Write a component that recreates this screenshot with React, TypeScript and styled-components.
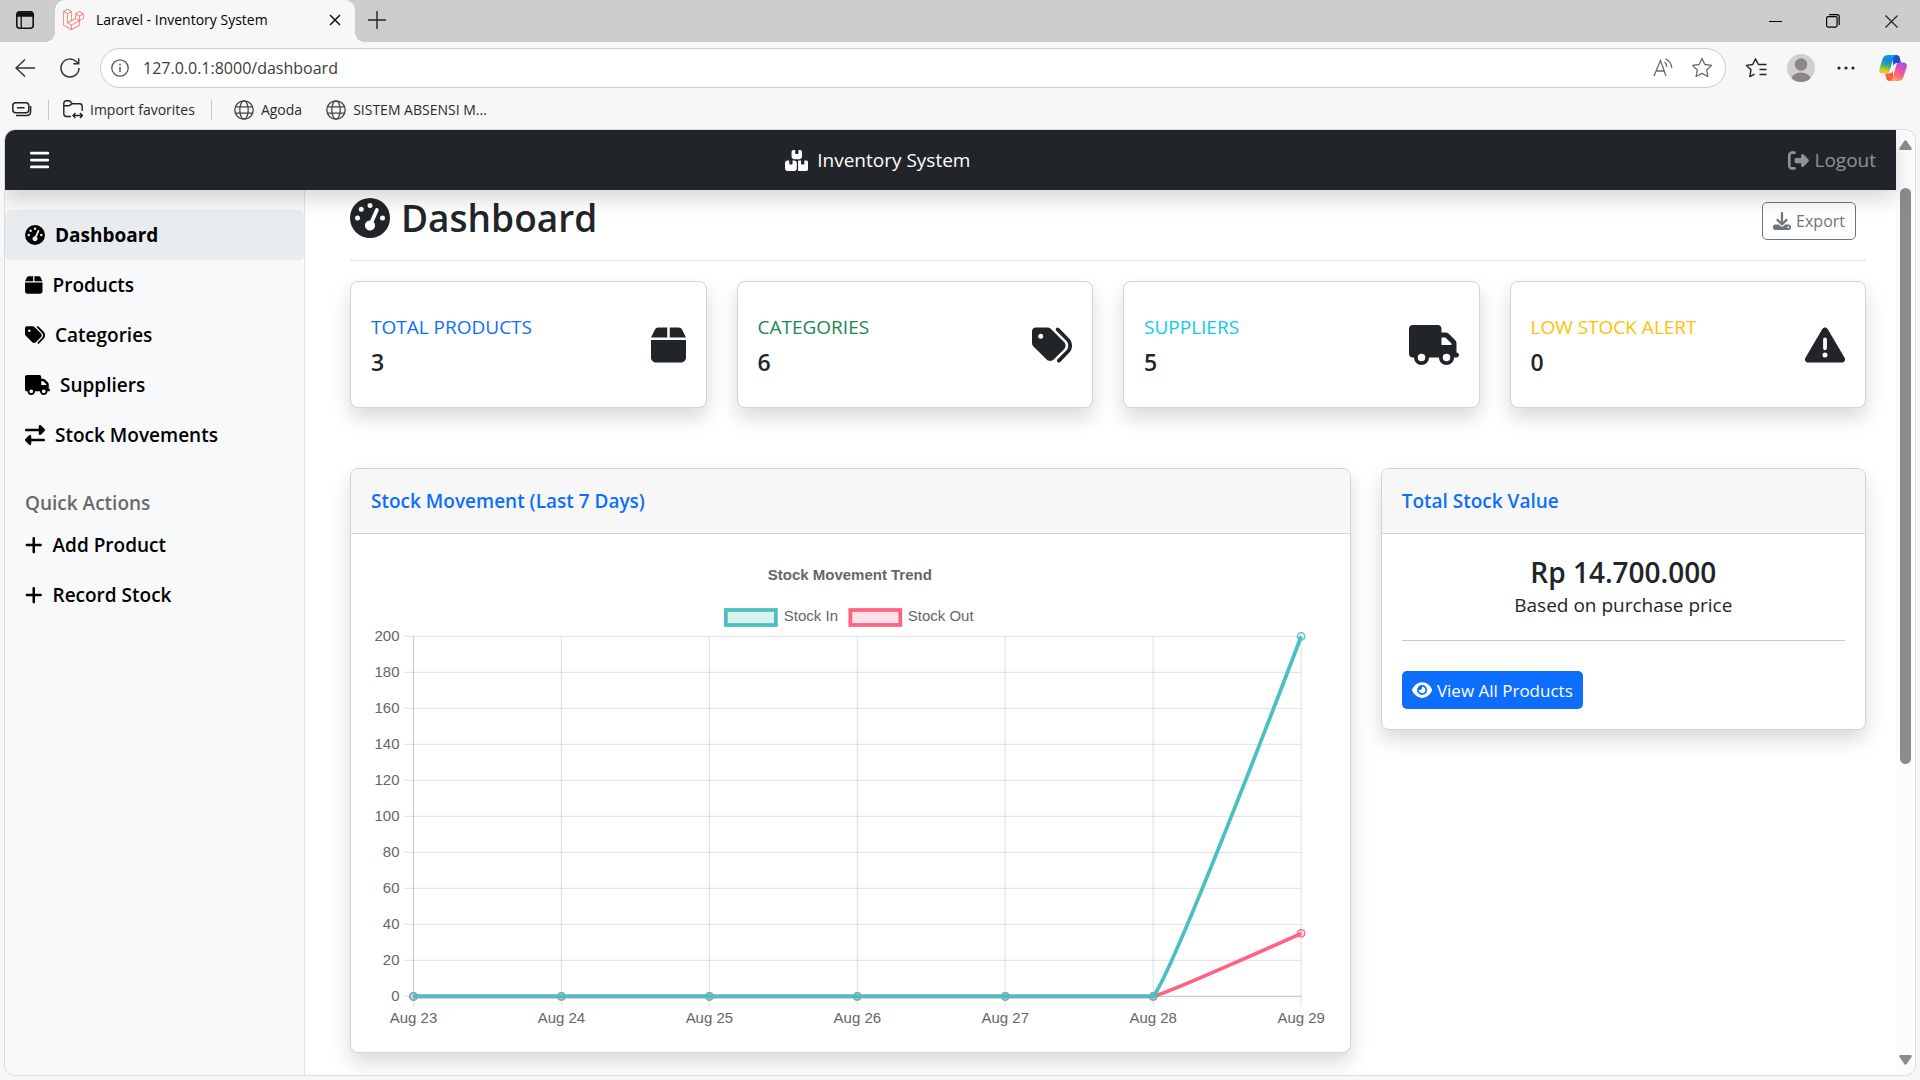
import React from "react";
import styled, { createGlobalStyle, css } from "styled-components";
import {
  FaGaugeHigh, FaBox, FaTags, FaTruck, FaRightLeft, FaPlus, FaBars, FaBoxesStacked,
  FaRightFromBracket, FaDownload, FaTriangleExclamation, FaEye, FaLaravel,
} from "react-icons/fa6";

const uiFont = `"Segoe UI", "Open Sans", "Noto Sans", sans-serif`;
const shadow = "0 10px 20px rgba(0, 0, 0, 0.15)";

const GlobalStyle = createGlobalStyle`
  *, *::before, *::after { box-sizing: border-box; }
  body { margin: 0; font-family: ${uiFont}; color: #212529; background: #f7f7f7; }
  h1, h2, h3, p, ul, dl, dd { margin: 0; padding: 0; }
  ul { list-style: none; }
  a { text-decoration: none; color: inherit; }
  button, input { font: inherit; color: inherit; }
  svg { flex: none; display: block; }
`;

/* ---------- Browser window ---------- */

const Window = styled.div`
  display: flex;
  flex-direction: column;
  height: 100vh;
  overflow: hidden;
`;

const PlainButton = styled.button`
  display: grid;
  place-items: center;
  padding: 0;
  border: 0;
  background: none;
  color: #1f1f1f;
`;

const TabStrip = styled.header`
  display: flex;
  height: 42px;
  flex: none;
  background: #cdcdcd;
`;

const TabMenuButton = styled(PlainButton)`
  width: 50px;
  height: 40px;
`;

const Tab = styled.div`
  position: relative;
  display: flex;
  align-items: center;
  width: 300px;
  margin-left: 5px;
  padding: 0 10px 3px 8px;
  border-radius: 10px 10px 0 0;
  background: #f7f7f7;
  font-size: 14px;
  color: #000;
  svg.logo { color: #ff5a4f; }
  &::before, &::after {
    content: "";
    position: absolute;
    bottom: 0;
    width: 10px;
    height: 10px;
  }
  &::before { left: -10px; background: radial-gradient(circle at 0 0, transparent 10px, #f7f7f7 10px); }
  &::after { right: -10px; background: radial-gradient(circle at 100% 0, transparent 10px, #f7f7f7 10px); }
`;

const TabTitle = styled.span`
  flex: 1;
  margin-left: 12px;
  white-space: nowrap;
`;

const TabButton = styled(PlainButton)`
  width: 20px;
  height: 20px;
`;

const NewTabButton = styled(PlainButton)`
  width: 44px;
  height: 40px;
`;

const WindowControls = styled.div`
  display: flex;
  margin-left: auto;
  button { width: 58px; height: 42px; }
`;

const Toolbar = styled.div`
  display: flex;
  align-items: center;
  flex: none;
  height: 52px;
  padding: 0 13px 0 10px;
`;

const NavButton = styled(PlainButton)`
  width: 30px;
  height: 30px;
  & + & { margin-left: 15px; }
`;

const AddressBar = styled.label`
  display: flex;
  align-items: center;
  flex: 1;
  height: 40px;
  margin-left: 15px;
  padding: 0 12px 0 10px;
  border: 1px solid #cbcbcb;
  border-radius: 20px;
  background: #fff;
  color: #5c5c5c;
`;

const AddressInput = styled.input`
  flex: 1;
  min-width: 0;
  margin: 0 14px;
  padding: 0;
  border: 0;
  outline: 0;
  background: none;
  font-size: 16px;
  color: #3c3c3c;
`;

const AddressActions = styled.div`
  display: flex;
  gap: 18px;
  button { color: #6a6a6a; }
`;

const ToolbarActions = styled.div`
  display: flex;
  align-items: center;
  gap: 17px;
  margin-left: 20px;
`;

const Favorites = styled.nav`
  display: flex;
  align-items: center;
  flex: none;
  height: 36px;
  padding: 0 0 5px 12px;
  font-size: 14px;
  color: #2b2b2b;
  a { display: flex; align-items: center; gap: 7px; white-space: nowrap; }
`;

const Divider = styled.span`
  width: 1px;
  height: 20px;
  margin: 0 14px 0 16px;
  background: #c6c6c6;
`;

const FavoriteLinks = styled.div`
  display: flex;
  gap: 24px;
  margin-left: 8px;
`;

/* ---------- Page ---------- */

const Viewport = styled.div`
  display: flex;
  flex: 1;
  min-height: 0;
  margin: 0 5px 5px;
  border-radius: 10px;
  overflow: hidden;
  background: #fff;
  box-shadow: 0 0 0 1px #dcdcdc;
`;

const Page = styled.div`
  display: flex;
  flex-direction: column;
  flex: 1;
  min-width: 0;
`;

const Navbar = styled.header`
  position: relative;
  z-index: 1;
  display: grid;
  grid-template-columns: 5fr auto 6fr;
  align-items: center;
  flex: none;
  height: 60px;
  padding: 0 20px 0 25px;
  background: #212529;
  color: #fff;
  box-shadow: ${shadow};
`;

const MenuButton = styled(PlainButton)`
  justify-self: start;
  color: #fff;
`;

const Brand = styled.a`
  display: flex;
  align-items: center;
  gap: 9px;
  font-size: 19px;
`;

const Logout = styled.a`
  display: flex;
  align-items: center;
  justify-self: end;
  gap: 5px;
  font-size: 19px;
  color: #909294;
`;

const Body = styled.div`
  display: flex;
  flex: 1;
  min-height: 0;
`;

const Sidebar = styled.nav`
  flex: none;
  width: 300px;
  padding-top: 20px;
  border-right: 1px solid #dee2e6;
  background: #f8f9fa;
`;

const SideLink = styled.a<{ $active?: boolean }>`
  display: flex;
  align-items: center;
  gap: 10px;
  height: 50px;
  padding: 0 20px;
  border-radius: 5px;
  font-size: 19px;
  font-weight: 600;
  color: #000;
  ${(p) => p.$active && css`
    background: #e9ecef;
    font-weight: 700;
  `}
`;

const SideHeading = styled.h2`
  margin: 30px 20px 4px;
  font-size: 19px;
  font-weight: 600;
  line-height: 26px;
  color: #67696c;
`;

const Main = styled.main`
  flex: 1;
  min-width: 0;
  padding: 0 30px 0 45px;
  overflow: hidden;
`;

const TitleRow = styled.div`
  display: flex;
  align-items: center;
  justify-content: space-between;
  height: 71px;
  margin-bottom: 20px;
  padding-right: 10px;
  border-bottom: 1px solid #dee2e6;
`;

const Title = styled.h1`
  display: flex;
  align-items: center;
  gap: 11px;
  padding-bottom: 15px;
  font-size: 37px;
  font-weight: 600;
  line-height: 48px;
`;

const actionButton = css`
  display: inline-flex;
  align-items: center;
  gap: 5px;
  height: 38px;
  padding: 0 10px;
  border-radius: 5px;
`;

const ExportButton = styled.button`
  ${actionButton}
  margin-top: -8px;
  border: 1px solid #6c757d;
  background: none;
  font-size: 16px;
  color: #6c757d;
`;

const ProductsLink = styled.a`
  ${actionButton}
  background: #0d6efd;
  font-size: 17px;
  color: #fff;
`;

const StatGrid = styled.section`
  display: grid;
  grid-template-columns: repeat(4, 1fr);
  gap: 30px;
  margin-bottom: 60px;
`;

const Card = styled.article`
  border: 1px solid #d3d3d3;
  border-radius: 8px;
  background: #fff;
  box-shadow: ${shadow};
`;

const StatCard = styled(Card)`
  display: flex;
  align-items: center;
  justify-content: space-between;
  height: 127px;
  padding: 0 20px;
`;

const StatLabel = styled.h2<{ $color: string }>`
  font-size: 19px;
  font-weight: 400;
  line-height: 30px;
  text-transform: uppercase;
  color: ${(p) => p.$color};
`;

const StatValue = styled.p`
  margin-top: 5px;
  font-size: 23px;
  font-weight: 600;
  line-height: 30px;
`;

const PanelRow = styled.section`
  display: flex;
  align-items: flex-start;
  gap: 30px;
`;

const ChartCard = styled(Card)`
  width: calc((100% + 30px) * 2 / 3 - 30px);
`;

const ValueCard = styled(Card)`
  flex: 1;
`;

const CardHeader = styled.h2`
  padding: 0 20px;
  border-bottom: 1px solid #d3d3d3;
  border-radius: 7px 7px 0 0;
  background: #f7f7f7;
  font-size: 19px;
  font-weight: 600;
  line-height: 64px;
  color: #0d6efd;
`;

const CardBody = styled.div`
  padding: 20px;
`;

const ValueSummary = styled.div`
  padding-bottom: 20px;
  margin-bottom: 30px;
  border-bottom: 1px solid #c8c9ca;
  text-align: center;
`;

const Amount = styled.p`
  font-size: 28px;
  font-weight: 600;
  line-height: 36px;
`;

const Basis = styled.p`
  font-size: 19px;
  line-height: 30px;
`;

const ChartSvg = styled.svg`
  width: 100%;
  height: auto;
  font-family: Helvetica, "Liberation Sans", Arial, sans-serif;
  font-size: 15px;
`;

/* ---------- Scroll bar ---------- */

const ScrollTrack = styled.div`
  display: flex;
  flex-direction: column;
  align-items: center;
  flex: none;
  width: 19px;
  padding: 10px 0;
  background: #fcfcfc;
`;

const ScrollGap = styled.div<{ $grow: number }>`
  flex: ${(p) => p.$grow} 0 0;
`;

const Thumb = styled.div`
  flex: 576 0 0;
  width: 11px;
  border-radius: 6px;
  background: #8b8b8b;
`;

/* ---------- Icons ---------- */

/* Each glyph keeps the width of its own box, given as a ratio of the height. */
const IconSlot = styled.span<{ $size: number; $ratio?: number }>`
  display: flex;
  svg {
    width: ${(p) => p.$size * (p.$ratio || 1)}px;
    height: ${(p) => p.$size}px;
  }
`;

const Globe = () => (
  <svg width="20" height="20" viewBox="0 0 20 20" fill="none" stroke="#444" strokeWidth="1.3">
    <circle cx="10" cy="10" r="9.2" />
    <ellipse cx="10" cy="10" rx="4.2" ry="9.2" />
    <path d="M1.6 6.8h16.8M1.6 13.2h16.8" />
  </svg>
);

const Copilot = () => (
  <svg width="28" height="26" viewBox="0 0 28 26">
    <defs>
      <linearGradient id="cpA" x1="0.6" y1="0" x2="0.4" y2="1">
        <stop offset="0" stopColor="#0fa5e9" />
        <stop offset="0.3" stopColor="#1487dc" />
        <stop offset="0.6" stopColor="#3fae80" />
        <stop offset="0.85" stopColor="#d3cf22" />
        <stop offset="1" stopColor="#ffc21a" />
      </linearGradient>
      <linearGradient id="cpB" x1="0.8" y1="0" x2="0.3" y2="1">
        <stop offset="0" stopColor="#a34df5" />
        <stop offset="0.45" stopColor="#e9549f" />
        <stop offset="0.7" stopColor="#fb6a78" />
        <stop offset="1" stopColor="#ffb05a" />
      </linearGradient>
    </defs>
    <path d="M13 0h4.500c1.800 0 2.800 1 3.300 2.600L22 8h-4c-2 0-3 1-3.600 3z" fill="#1c4fd8" />
    <path d="M15 26h-4.500c-1.800 0-2.800-1-3.300-2.800L6 18.500h4c2 0 3-1 3.600-3z" fill="#f9603c" />
    <path d="M9 0h8.500c-1.700 0-2.600 1.200-3.100 3l-3.600 12.500c-.6 2-1.600 3-3.600 3H3.500C.8 18.500-.3 16.400.3 14L3.600 4C4.500 1.400 6.300 0 9 0z" fill="url(#cpA)" />
    <path d="M19 26h-8.500c1.700 0 2.600-1.200 3.100-3l3.600-12.500c.6-2 1.600-3 3.600-3h3.700c2.700 0 3.800 2.100 3.200 4.500l-3.300 10c-.9 2.600-2.700 4-5.400 4z" fill="url(#cpB)" />
  </svg>
);

/* ---------- Chart ---------- */

const days = ["Aug 23", "Aug 24", "Aug 25", "Aug 26", "Aug 27", "Aug 28", "Aug 29"];
const ticks = Array.from({ length: 11 }, (_, i) => i * 20);
const stockIn = [0, 0, 0, 0, 0, 0, 200];
const stockOut = [0, 0, 0, 0, 0, 0, 35];
const left = 42.5;
const top = 82.5;
const stepX = 148;
const stepY = 36;
const px = (i: number) => left + i * stepX;
const py = (v: number) => top + ((200 - v) / 20) * stepY;
const TENSION = 0.1;

function smoothPath(values: number[]) {
  const pts = values.map((v, i) => ({ x: px(i), y: py(v) }));
  const clamp = (y: number) => Math.min(Math.max(y, py(200)), py(0));
  const handles = pts.map((p, i) => {
    const a = pts[i - 1] || p;
    const b = pts[i + 1] || p;
    const before = Math.hypot(p.x - a.x, p.y - a.y);
    const after = Math.hypot(b.x - p.x, b.y - p.y);
    const fa = (TENSION * before) / (before + after);
    const fb = (TENSION * after) / (before + after);
    const end = i === 0 || i === pts.length - 1;
    return end
      ? { inn: p, out: p }
      : {
          inn: { x: p.x - fa * (b.x - a.x), y: clamp(p.y - fa * (b.y - a.y)) },
          out: { x: p.x + fb * (b.x - a.x), y: clamp(p.y + fb * (b.y - a.y)) },
        };
  });
  return pts
    .map((p, i) =>
      i === 0
        ? `M${p.x} ${p.y}`
        : `C${handles[i - 1].out.x} ${handles[i - 1].out.y} ${handles[i].inn.x} ${handles[i].inn.y} ${p.x} ${p.y}`
    )
    .join("");
}

const Series = ({ values, color }: { values: number[]; color: string }) => (
  <g stroke={color}>
    <path d={smoothPath(values)} fill="none" strokeWidth="3.75" />
    {values.map((v, i) => (
      <circle key={i} cx={px(i)} cy={py(v)} r="3.75" fill={color} fillOpacity="0.2" strokeWidth="1.25" />
    ))}
  </g>
);

const StockChart = () => (
  <ChartSvg viewBox="0 0 959 478" role="img" aria-label="Stock Movement Trend">
    <g fill="#666">
      <text x="479" y="26" textAnchor="middle" fontWeight="700">Stock Movement Trend</text>
      <text x="413" y="67">Stock In</text>
      <text x="537" y="67">Stock Out</text>
    </g>
    <g strokeWidth="3.75" fillOpacity="0.2">
      <rect x="355" y="56" width="50" height="15" stroke="#4bc0c0" fill="#4bc0c0" />
      <rect x="479.500" y="56" width="50" height="15" stroke="#ff6384" fill="#ff6384" />
    </g>
    <g stroke="#000" strokeOpacity="0.1" strokeWidth="1.25">
      {days.map((d, i) => (
        <path key={d} d={`M${px(i)} ${py(200)}V${py(0) + 10}`} />
      ))}
      {ticks.map((t) => (
        <path key={t} d={`M${left - 10} ${py(t)}H${px(6)}`} />
      ))}
      <path d={`M${px(0)} ${py(200)}V${py(0)}H${px(6)}`} fill="none" />
    </g>
    <g fill="#666">
      {ticks.map((t) => (
        <text key={t} x={left - 14} y={py(t) + 5} textAnchor="end">{t}</text>
      ))}
      {days.map((d, i) => (
        <text key={d} x={px(i)} y={py(0) + 27} textAnchor="middle">{d}</text>
      ))}
    </g>
    <Series values={stockOut} color="#ff6384" />
    <Series values={stockIn} color="#4bc0c0" />
  </ChartSvg>
);

/* ---------- App ---------- */

const stats = [
  { label: "Total Products", value: 3, color: "#0d6efd", icon: <FaBox />, ratio: 0.875 },
  { label: "Categories", value: 6, color: "#198754", icon: <FaTags />, ratio: 1 },
  { label: "Suppliers", value: 5, color: "#0dcaf0", icon: <FaTruck />, ratio: 1.25 },
  { label: "Low Stock Alert", value: 0, color: "#ffc107", icon: <FaTriangleExclamation />, ratio: 1 },
];

const menu = [
  { label: "Dashboard", icon: <FaGaugeHigh />, ratio: 1, active: true },
  { label: "Products", icon: <FaBox />, ratio: 0.875 },
  { label: "Categories", icon: <FaTags />, ratio: 1 },
  { label: "Suppliers", icon: <FaTruck />, ratio: 1.25 },
  { label: "Stock Movements", icon: <FaRightLeft />, ratio: 1 },
];

const actions = ["Add Product", "Record Stock"];

export default function App() {
  return (
    <Window>
      <GlobalStyle />
      <TabStrip>
        <TabMenuButton aria-label="Tab actions">
          <svg width="18" height="18" viewBox="0 0 18 18" fill="none" stroke="#111" strokeWidth="1.6">
            <rect x="0.8" y="0.8" width="16.400" height="16.400" rx="3" />
            <path d="M1 3.500h16" strokeWidth="4.500" />
            <path d="M5.200 5v12" strokeWidth="1.300" />
          </svg>
        </TabMenuButton>
        <Tab>
          <FaLaravel className="logo" size={21} />
          <TabTitle>Laravel - Inventory System</TabTitle>
          <TabButton aria-label="Close tab">
            <svg width="12" height="12" viewBox="0 0 12 12" stroke="#111" strokeWidth="1.500"><path d="M1 1l10 10M11 1L1 11" /></svg>
          </TabButton>
        </Tab>
        <NewTabButton aria-label="New tab">
          <svg width="18" height="18" viewBox="0 0 18 18" stroke="#222" strokeWidth="1.400"><path d="M9 0v18M0 9h18" /></svg>
        </NewTabButton>
        <WindowControls>
          <PlainButton aria-label="Minimize"><svg width="13" height="13" viewBox="0 0 13 13" stroke="#000"><path d="M0 6.500h13" /></svg></PlainButton>
          <PlainButton aria-label="Restore">
            <svg width="14" height="14" viewBox="0 0 14 14" fill="none" stroke="#000" strokeWidth="1.200"><rect x="0.600" y="2.600" width="10.500" height="10.500" rx="1.500" /><path d="M3 .6h8q2.200 0 2.200 2.200V11" /></svg>
          </PlainButton>
          <PlainButton aria-label="Close"><svg width="13" height="13" viewBox="0 0 13 13" stroke="#222" strokeWidth="1.200"><path d="M.5.5l12 12M12.500.5l-12 12" /></svg></PlainButton>
        </WindowControls>
      </TabStrip>

      <Toolbar>
        <NavButton aria-label="Back">
          <svg width="20" height="18" viewBox="0 0 20 18" fill="none" stroke="#333" strokeWidth="1.400"><path d="M20 9H1M10 .5L1 9l9 8.500" /></svg>
        </NavButton>
        <NavButton aria-label="Refresh">
          <svg width="20" height="20" viewBox="0 0 20 20" fill="none" stroke="#333" strokeWidth="1.500"><path d="M19 10a9 9 0 1 1-2.800-6.500L18.500 5.500M18.700 .3v5.400h-5.400" /></svg>
        </NavButton>
        <AddressBar>
          <svg width="18" height="18" viewBox="0 0 18 18" fill="none" stroke="#555" strokeWidth="1.300"><circle cx="9" cy="9" r="8.200" /><path d="M9 8v5M9 4.800v1.600" strokeWidth="1.500" /></svg>
          <AddressInput aria-label="Address" type="text" defaultValue="127.0.0.1:8000/dashboard" />
          <AddressActions>
            <PlainButton aria-label="Read aloud">
              <svg width="20" height="20" viewBox="0 0 20 20" fill="none" stroke="#6a6a6a" strokeWidth="1.300"><path d="M1 18L7.500 2.500 13 18M3.200 13h8M11.500 4q2 1.500 2.300 4.800M12.500 .8Q18.500 4 18.800 10" /></svg>
            </PlainButton>
            <PlainButton aria-label="Add to favorites">
              <svg width="22" height="22" viewBox="0 0 22 22" fill="none" stroke="#6a6a6a" strokeWidth="1.300" strokeLinejoin="round"><path d="M11 1.500l2.900 6 6.600.9-4.800 4.600 1.200 6.500-5.900-3.100-5.900 3.100 1.200-6.500L1.500 8.400l6.600-.9z" /></svg>
            </PlainButton>
          </AddressActions>
        </AddressBar>
        <ToolbarActions>
          <PlainButton aria-label="Favorites">
            <svg width="24" height="22" viewBox="1 0 24 22" fill="none" stroke="#222" strokeWidth="1.400" strokeLinejoin="round"><path d="M13.300 7.500L10.500 1.800l-2.800 5.700-6.300.9L6 12.800l-1.200 6.800 4.800-2.500M13.300 7.500h8.200M14.500 12.500h7M14.500 17.500h7" /></svg>
          </PlainButton>
          <PlainButton aria-label="Profile">
            <svg width="28" height="28" viewBox="0 0 28 28"><defs><clipPath id="pf"><circle cx="14" cy="14" r="14" /></clipPath></defs><g clipPath="url(#pf)"><rect width="28" height="28" fill="#d2d0ce" /><circle cx="14" cy="10.500" r="6.200" fill="#8a8786" /><ellipse cx="14" cy="26" rx="10" ry="7.500" fill="#8a8786" /></g></svg>
          </PlainButton>
          <PlainButton aria-label="Settings and more">
            <svg width="30" height="6" viewBox="0 0 30 6" fill="#222"><circle cx="7" cy="3" r="1.600" /><circle cx="14" cy="3" r="1.600" /><circle cx="21" cy="3" r="1.600" /></svg>
          </PlainButton>
          <PlainButton aria-label="Copilot"><Copilot /></PlainButton>
        </ToolbarActions>
      </Toolbar>

      <Favorites>
        <PlainButton aria-label="Hide favorites">
          <svg width="20" height="15" viewBox="0 0 20 15" fill="none" stroke="#222" strokeWidth="1.500"><rect x="0.800" y="0.800" width="16" height="10" rx="3" /><path d="M5 5.800h7.500M18.600 4v5.500q0 4-4 4H4" /></svg>
        </PlainButton>
        <Divider />
        <a href="#import">
          <svg width="20" height="19" viewBox="0 0 20 19" fill="none" stroke="#222" strokeWidth="1.400"><path d="M8 16.500H3.500q-2.700 0-2.700-2.700V3.500Q.8.800 3.500.8h3l3 3h7q2.700 0 2.700 2.700V11M1 5.800h5l3-2M10.500 15.500h9M12.500 13l-2.500 2.500 2.500 2.500M17 13l2.500 2.500L17 18" /></svg>
          Import favorites
        </a>
        <Divider />
        <FavoriteLinks>
          <a href="#agoda"><Globe />Agoda</a>
          <a href="#absensi"><Globe />SISTEM ABSENSI M...</a>
        </FavoriteLinks>
      </Favorites>

      <Viewport>
        <Page>
          <Navbar>
            <MenuButton aria-label="Toggle menu"><IconSlot $size={22} $ratio={0.875}><FaBars /></IconSlot></MenuButton>
            <Brand href="#home"><IconSlot $size={21} $ratio={1.125}><FaBoxesStacked /></IconSlot>Inventory System</Brand>
            <Logout href="#logout"><IconSlot $size={21}><FaRightFromBracket /></IconSlot>Logout</Logout>
          </Navbar>
          <Body>
            <Sidebar>
              <ul>
                {menu.map((m) => (
                  <li key={m.label}>
                    <SideLink href="#" $active={m.active}><IconSlot $size={20} $ratio={m.ratio}>{m.icon}</IconSlot>{m.label}</SideLink>
                  </li>
                ))}
              </ul>
              <SideHeading>Quick Actions</SideHeading>
              <ul>
                {actions.map((a) => (
                  <li key={a}><SideLink href="#"><IconSlot $size={20} $ratio={0.875}><FaPlus /></IconSlot>{a}</SideLink></li>
                ))}
              </ul>
            </Sidebar>
            <Main>
              <TitleRow>
                <Title><IconSlot $size={40}><FaGaugeHigh /></IconSlot>Dashboard</Title>
                <ExportButton><IconSlot $size={18}><FaDownload /></IconSlot>Export</ExportButton>
              </TitleRow>
              <StatGrid>
                {stats.map((s) => (
                  <StatCard key={s.label}>
                    <div>
                      <StatLabel $color={s.color}>{s.label}</StatLabel>
                      <StatValue>{s.value}</StatValue>
                    </div>
                    <IconSlot $size={40} $ratio={s.ratio}>{s.icon}</IconSlot>
                  </StatCard>
                ))}
              </StatGrid>
              <PanelRow>
                <ChartCard>
                  <CardHeader>Stock Movement (Last 7 Days)</CardHeader>
                  <CardBody><StockChart /></CardBody>
                </ChartCard>
                <ValueCard>
                  <CardHeader>Total Stock Value</CardHeader>
                  <CardBody>
                    <ValueSummary>
                      <Amount>Rp 14.700.000</Amount>
                      <Basis>Based on purchase price</Basis>
                    </ValueSummary>
                    <ProductsLink href="#products"><IconSlot $size={18} $ratio={1.125}><FaEye /></IconSlot>View All Products</ProductsLink>
                  </CardBody>
                </ValueCard>
              </PanelRow>
            </Main>
          </Body>
        </Page>
        <ScrollTrack aria-hidden="true">
          <svg width="13" height="10" viewBox="0 0 13 10" fill="#8b8b8b"><path d="M5.500.8q1-1.200 2 0L12.500 8q.8 2-1 2h-10q-1.800 0-1-2z" /></svg>
          <ScrollGap $grow={38} />
          <Thumb />
          <ScrollGap $grow={291} />
          <svg width="13" height="10" viewBox="0 0 13 10" fill="#8b8b8b"><path d="M5.500 9.200q1 1.200 2 0L12.500 2q.8-2-1-2h-10q-1.800 0-1 2z" /></svg>
        </ScrollTrack>
      </Viewport>
    </Window>
  );
}
